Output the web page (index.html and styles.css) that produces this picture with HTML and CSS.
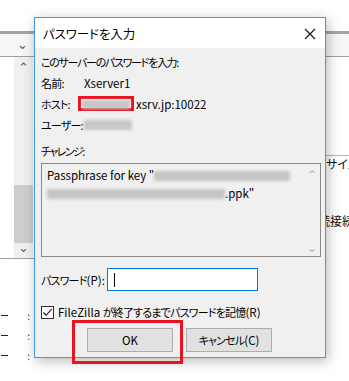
FILE: index.html
```html
<!DOCTYPE html>
<html lang="ja">
<head>
    <meta charset="UTF-8">
    <meta name="viewport" content="width=device-width, initial-scale=1.0">
    <title>パスワードを入力</title>
    <link rel="stylesheet" href="styles.css">
</head>
<body>
    <div class="desk">
        <div class="bg-top"></div>
        <div class="bg-bar">
            <span class="chev">&#8964;</span>
        </div>
        <div class="bg-main">
            <div class="pane-left">
                <div class="tree">
                    <div class="vscroll">
                        <span class="arrow up">&#8963;</span>
                        <span class="thumb"></span>
                        <span class="arrow down">&#8964;</span>
                    </div>
                </div>
                <div class="list">
                    <div class="list-row"><span class="dash"></span><span class="dots">:</span></div>
                    <div class="list-row"><span class="dash"></span><span class="dots">:</span></div>
                    <div class="list-row"><span class="dash"></span><span class="dots">:</span></div>
                </div>
            </div>
            <div class="pane-mid"></div>
            <div class="pane-right">
                <div class="right-top"></div>
                <div class="right-text ja first">サイズ</div>
                <div class="right-text ja">続接続</div>
            </div>
        </div>
    </div>

    <div class="dialog">
        <div class="titlebar">
            <span class="title">パスワードを入力</span>
            <svg class="close" width="12" height="12" viewBox="0 0 12 12">
                <path d="M1 1 L11 11 M11 1 L1 11" stroke="#111" stroke-width="1.1" fill="none"/>
            </svg>
        </div>
        <div class="dlg-body">
            <div class="row ja intro">このサーバーのパスワードを入力:</div>
            <div class="row">
                <span class="key ja">名前:</span>
                <span class="val">Xserver1</span>
            </div>
            <div class="row">
                <span class="key ja">ホスト:</span>
                <span class="mark host-mark"><span class="blur"></span></span><span class="host">xsrv.jp:10022</span>
            </div>
            <div class="row">
                <span class="key ja">ユーザー:</span>
                <span class="blur user-blur"></span>
            </div>

            <div class="row ja challenge-label">チャレンジ:</div>
            <div class="challenge">
                <div class="challenge-text">
                    <div>Passphrase for key "<span class="blur inline w1"></span></div>
                    <div><span class="blur inline w2"></span>.ppk"</div>
                </div>
                <div class="tscroll">
                    <span class="arrow-s">&#8963;</span>
                    <span class="arrow-s">&#8964;</span>
                </div>
            </div>

            <div class="pass-row">
                <label for="pass"><span class="ja">パスワード</span>(P):</label>
                <div class="pass-input" id="pass"><span class="caret"></span></div>
            </div>

            <div class="check-row">
                <span class="checkbox">
                    <svg width="11" height="11" viewBox="0 0 11 11">
                        <path d="M1.5 5.5 L4.2 8.3 L9.6 2.2" stroke="#111" stroke-width="1.1" fill="none"/>
                    </svg>
                </span>
                <span class="check-label">FileZilla <span class="ja">が終了するまでパスワードを記憶</span>(R)</span>
            </div>

            <div class="buttons">
                <button class="btn ok" type="button">OK<span class="ok-mark"></span></button>
                <button class="btn" type="button"><span class="ja">キャンセル</span>(C)</button>
            </div>
        </div>
    </div>
</body>
</html>
```

FILE: styles.css
```css
body {
    margin: 0;
    width: 349px;
    height: 381px;
    overflow: hidden;
    position: relative;
    background: #fff;
    font-family: "Noto Sans CJK JP", sans-serif;
    font-size: 11.5px;
    color: #000;
    font-feature-settings: "palt";
}
.ja {
    font-size: 11px;
    letter-spacing: -0.8px;
}

/* background window */
.desk {
    display: flex;
    flex-direction: column;
    height: 381px;
}
.bg-top {
    height: 31px;
    background: #fff;
}
.bg-bar {
    height: 22px;
    border-top: 3px solid #a5a5a5;
    border-bottom: 1px solid #a0a0a0;
    background: #f7f7f7;
    position: relative;
}
.chev {
    position: absolute;
    left: 17px;
    top: 0;
    font-size: 13px;
    color: #555;
}
.bg-main {
    flex: 1;
    display: flex;
}
.pane-left {
    width: 34px;
    display: flex;
    flex-direction: column;
}
.tree {
    height: 201px;
    border-bottom: 1px solid #a0a0a0;
    display: flex;
    justify-content: flex-end;
    padding-right: 1px;
}
.vscroll {
    width: 19px;
    background: #f0f0f0;
    display: flex;
    flex-direction: column;
    align-items: center;
}
.arrow {
    height: 20px;
    font-size: 13px;
    color: #606060;
    line-height: 20px;
}
.arrow.up {
    margin-bottom: 108px;
}
.thumb {
    width: 19px;
    height: 58px;
    background: #cdcdcd;
}
.arrow.down {
    margin-top: -6px;
}
.list {
    flex: 1;
    padding-top: 50px;
    display: flex;
    flex-direction: column;
    gap: 8px;
}
.list-row {
    height: 12px;
    display: flex;
    align-items: center;
    justify-content: space-between;
    padding-right: 4px;
}
.dash {
    width: 7px;
    height: 1px;
    margin-left: 1px;
    background: #222;
}
.dots {
    color: #444;
    font-size: 10px;
}
.pane-mid {
    flex: 1;
}
.pane-right {
    width: 24px;
    overflow: hidden;
    white-space: nowrap;
}
.right-top {
    height: 98px;
    border-bottom: 1px solid #b8b8b8;
}
.right-text {
    margin-left: 1px;
    height: 20px;
    line-height: 20px;
    font-size: 12px;
    letter-spacing: 0;
    color: #111;
}
.right-text.first {
    margin-top: -2px;
    margin-bottom: 37px;
}
.right-text:last-child {
    margin-left: -7px;
}

/* dialog */
.dialog {
    position: absolute;
    left: 34px;
    top: 17px;
    width: 290px;
    height: 339px;
    border: 1px solid #3d9be0;
    background: #f0f0f0;
    box-shadow: 2px 3px 12px rgba(0, 0, 0, 0.28);
}
.titlebar {
    height: 30px;
    background: #fff;
    display: flex;
    align-items: center;
    justify-content: space-between;
    padding: 0 9px 0 8px;
}
.title {
    font-size: 12.5px;
    letter-spacing: -0.1px;
}
.close {
    margin-top: 1px;
}
.dlg-body {
    padding: 3px 6px 0;
}
.row {
    height: 21px;
    display: flex;
    align-items: center;
    white-space: nowrap;
}
.row.intro {
    letter-spacing: -1.3px;
}
.key {
    width: 43px;
    flex-shrink: 0;
}
.mark {
    border: 3px solid #e8131d;
    box-sizing: border-box;
    display: inline-flex;
}
.host-mark {
    width: 56px;
    height: 15px;
    margin-left: -6px;
    padding: 1px;
    background: #f0f0f0;
    flex-shrink: 0;
}
.blur {
    display: inline-block;
    background: #c6c6c6;
    filter: blur(1.5px);
}
.host-mark .blur {
    flex: 1;
    height: 9px;
}
.host {
    margin-left: 2px;
}
.user-blur {
    width: 48px;
    height: 10px;
}
.row.challenge-label {
    margin-top: 6px;
    height: 20px;
    letter-spacing: -1.6px;
}
.challenge {
    margin-top: 2px;
    width: 280px;
    height: 94px;
    box-sizing: border-box;
    border: 1px solid #8a8a8a;
    display: flex;
}
.challenge-text {
    flex: 1;
    padding: 2px 0 0 5px;
    line-height: 18px;
    white-space: nowrap;
    overflow: hidden;
}
.blur.inline {
    height: 10px;
    vertical-align: -1px;
}
.w1 {
    width: 136px;
}
.w2 {
    width: 178px;
}
.tscroll {
    width: 17px;
    display: flex;
    flex-direction: column;
    justify-content: space-between;
    align-items: center;
    padding: 2px 0 1px;
}
.arrow-s {
    font-size: 12px;
    color: #b4b4b4;
    line-height: 16px;
}
.pass-row {
    margin-top: 11px;
    height: 23px;
    display: flex;
    align-items: center;
    white-space: nowrap;
}
.pass-row label {
    width: 66px;
    flex-shrink: 0;
}
.pass-input {
    width: 151px;
    height: 23px;
    box-sizing: border-box;
    border: 1px solid #0078d7;
    background: #fff;
    display: flex;
    align-items: center;
    padding-left: 6px;
}
.caret {
    width: 1px;
    height: 14px;
    background: #000;
}
.check-row {
    margin-top: 14px;
    height: 14px;
    display: flex;
    align-items: center;
    gap: 4px;
    white-space: nowrap;
}
.checkbox {
    width: 13px;
    height: 13px;
    box-sizing: border-box;
    border: 1px solid #333;
    background: #fff;
    display: flex;
    align-items: center;
    justify-content: center;
}
.buttons {
    margin-top: 9px;
    display: flex;
    justify-content: center;
    gap: 13px;
    padding-right: 1px;
}
.btn {
    width: 86px;
    height: 24px;
    border: 1px solid #adadad;
    background: #e1e1e1;
    font-family: inherit;
    font-size: 11.5px;
    font-feature-settings: "palt";
    color: #000;
    padding: 0;
    position: relative;
}
.ok-mark {
    position: absolute;
    left: -16px;
    top: -9px;
    width: 111px;
    height: 44px;
    box-sizing: border-box;
    border: 3px solid #e8131d;
}
```
